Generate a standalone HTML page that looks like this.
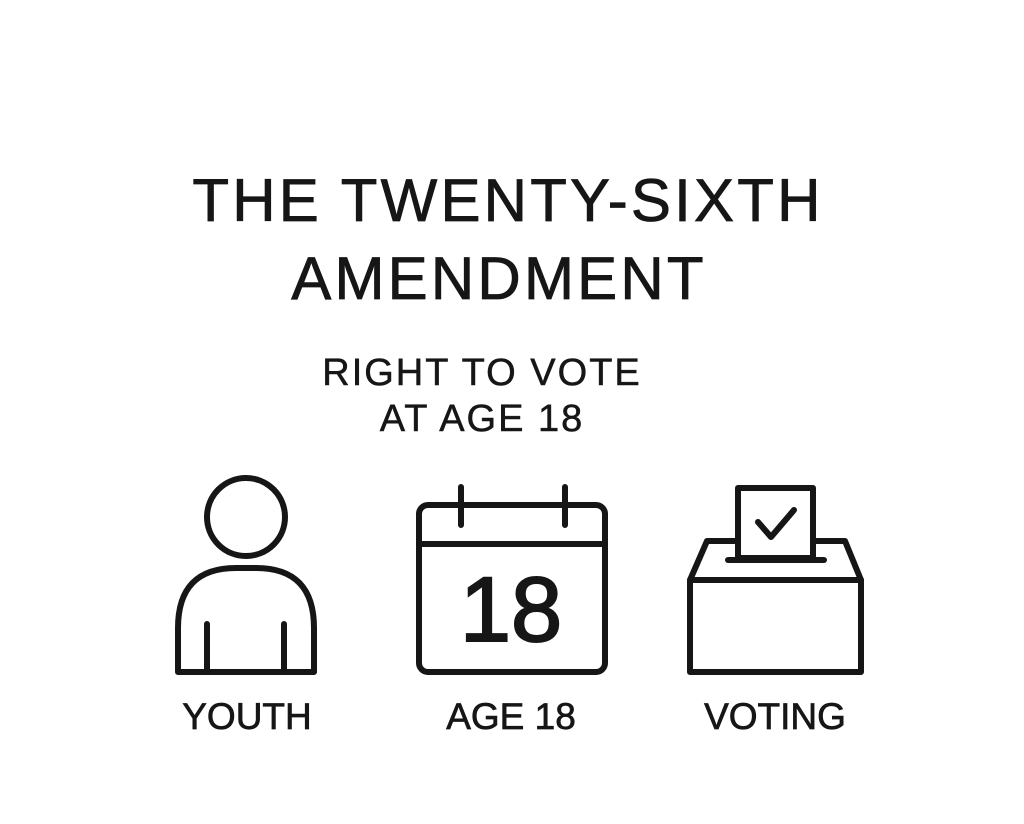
<!DOCTYPE html>
<html><head><style>
body{margin:0;width:1024px;height:824px;background:#fff;font-family:"Liberation Sans",sans-serif;color:#161616;position:relative;overflow:hidden}
.t{position:absolute;left:0;width:1010px;text-align:center;white-space:nowrap;-webkit-text-stroke:0.8px #161616}
.h{font-size:60px;letter-spacing:3.2px;line-height:78px}
.s{font-size:38px;letter-spacing:2px;line-height:46px;top:350px;-webkit-text-stroke:0.5px #161616}
.l{position:absolute;font-size:37px;top:696px;text-align:center;width:240px;-webkit-text-stroke:0.7px #161616}
</style></head><body>
<div class="t h" style="top:162px;left:3px">THE TWENTY-SIXTH</div>
<div class="t h" style="top:240px;left:-6px">AMENDMENT</div>
<div class="t s" style="left:-30px;width:1024px">RIGHT TO VOTE<br>AT AGE 18</div>
<svg width="1024" height="824" style="position:absolute;left:0;top:0" fill="none" stroke="#161616" stroke-width="6" stroke-linejoin="round" stroke-linecap="round">
<circle cx="246" cy="517" r="39"/>
<path d="M178 672 V628 Q178 568 236 568 H256 Q314 568 314 628 V672 Z"/>
<path d="M207 624 V672 M284 624 V672"/>
<rect x="419" y="505" width="186" height="167" rx="9"/>
<path d="M419 544 H605 M461 487 V525 M565 487 V525"/>
<rect x="738" y="488" width="75" height="70"/>
<path d="M758 522 L771 537 L794 510"/>
<path d="M728 560 H824"/>
<path d="M736 541 H707 L690 580 H861 L845 541 H813"/>
<rect x="690" y="580" width="171" height="92"/>
</svg>
<div class="t" style="font-size:92px;top:558px;left:0;width:1022px;-webkit-text-stroke:2px #161616">18</div>
<div class="l" style="left:127px">YOUTH</div>
<div class="l" style="left:391px">AGE 18</div>
<div class="l" style="left:655px">VOTING</div>
</body></html>
